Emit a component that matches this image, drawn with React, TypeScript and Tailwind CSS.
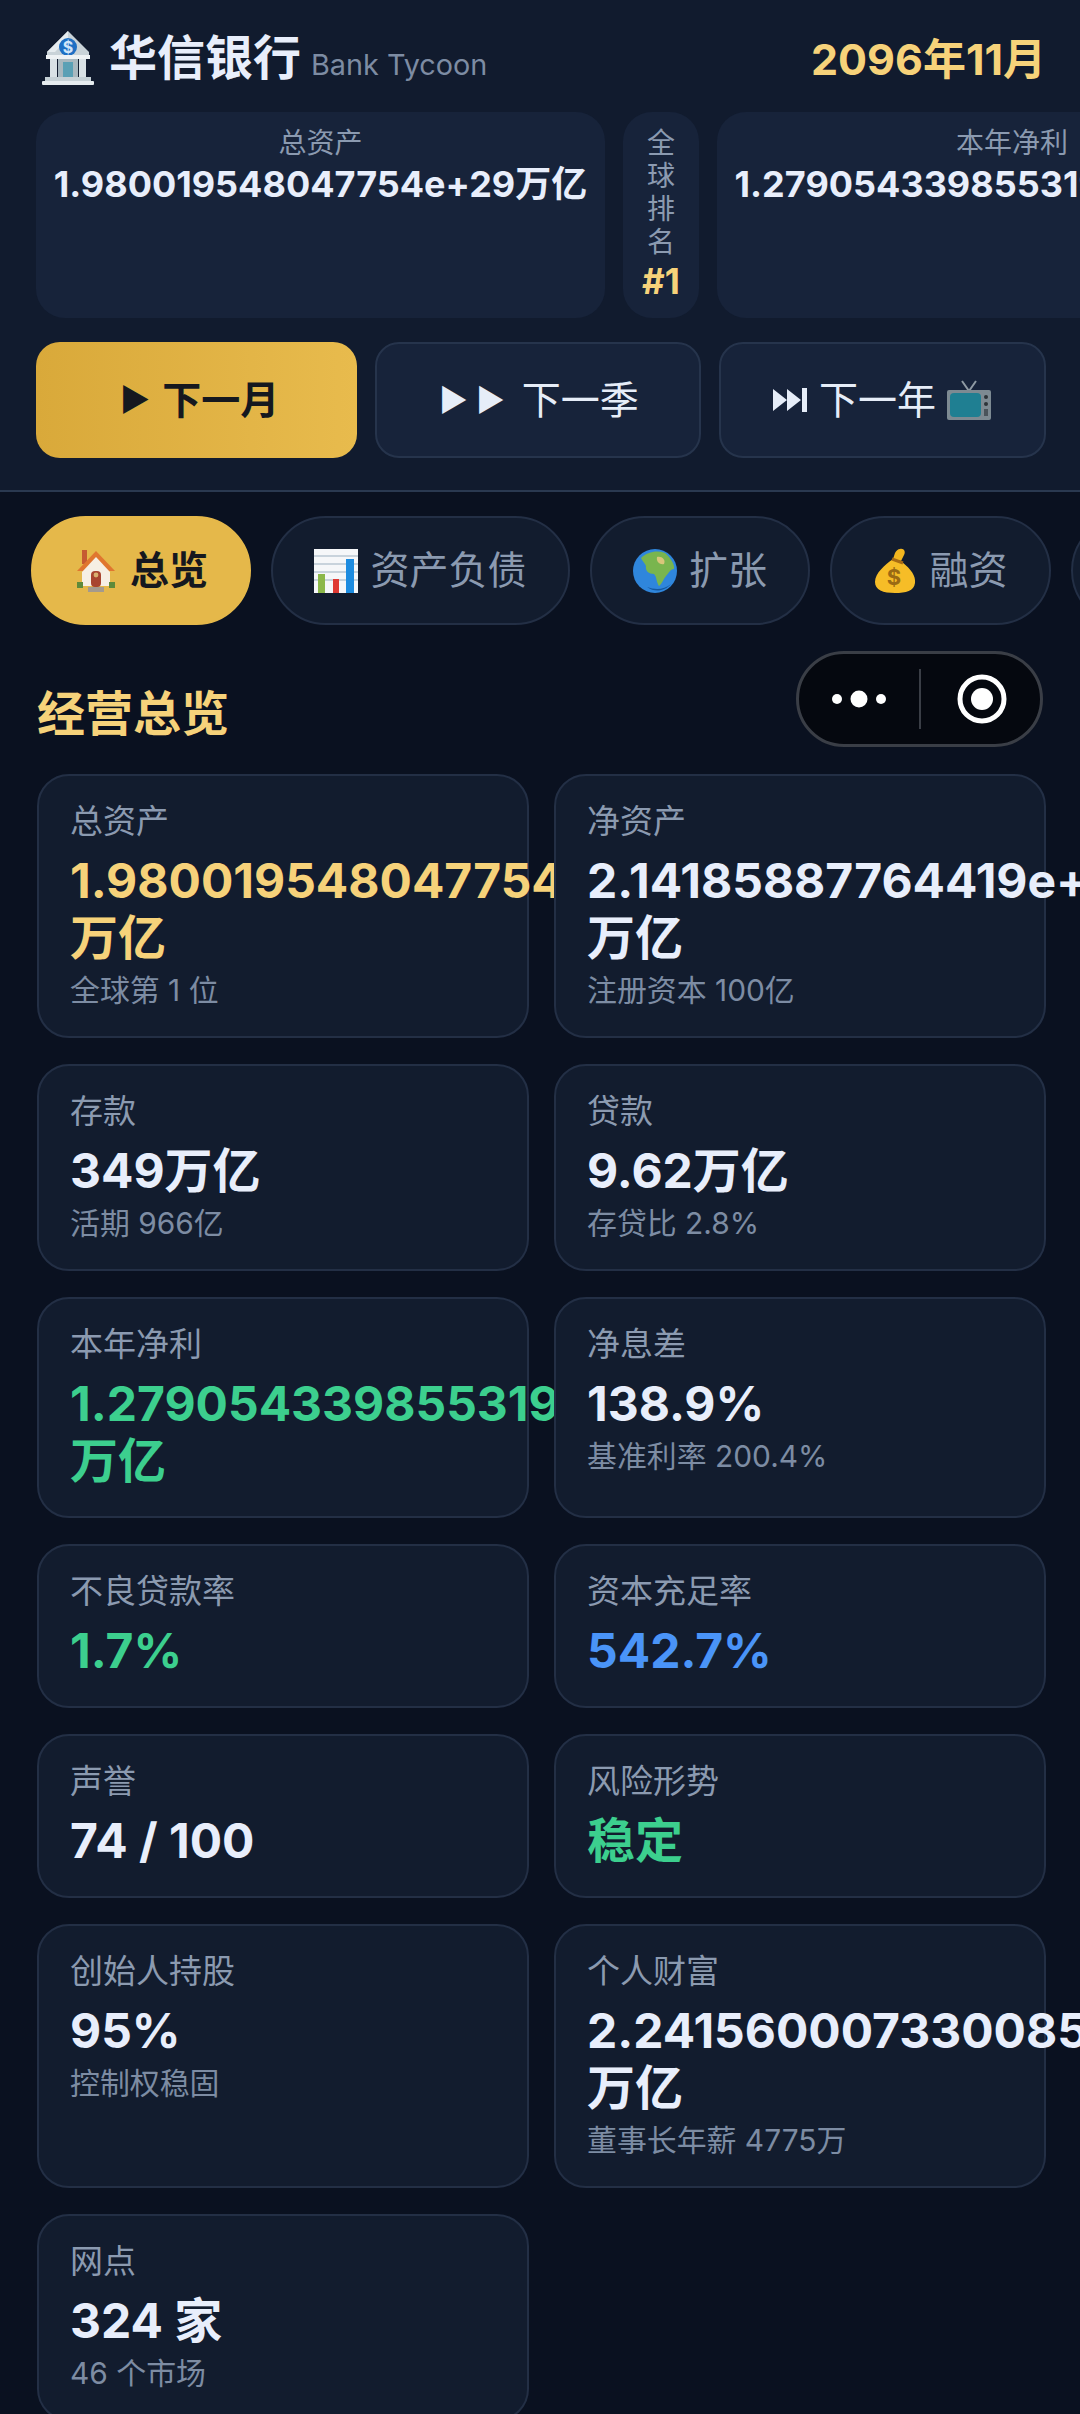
import React from "react";

const Bank = () => (
  <svg width="56" height="56" viewBox="0 0 54 56" className="shrink-0">
    <path d="M27 1 L48 22 V26 H6 V22 Z" fill="#c9d3d8" />
    <path d="M27 1 L6 22 H14 L27 8 Z" fill="#e6ecef" />
    <circle cx="27" cy="17" r="9" fill="#1e6fc4" />
    <text x="27" y="23" textAnchor="middle" fontSize="16" fontWeight="700" fill="#cfe5fa">$</text>
    <rect x="5" y="25" width="44" height="4" fill="#eef2f4" />
    <rect x="9" y="29" width="7" height="18" fill="#d9e1e5" />
    <rect x="38" y="29" width="7" height="18" fill="#d9e1e5" />
    <rect x="17" y="29" width="20" height="18" fill="#a9b8bf" />
    <rect x="22" y="32" width="10" height="15" fill="#5aa0b5" />
    <rect x="4" y="47" width="46" height="4" fill="#c6d1d6" />
    <rect x="1" y="51" width="52" height="4" rx="1" fill="#e6ecef" />
  </svg>
);

const Tv = () => (
  <svg width="46" height="42" viewBox="0 0 46 42" className="shrink-0">
    <path d="M16 2 L23 12 L30 2" fill="none" stroke="#8f9aa3" strokeWidth="2" />
    <rect x="1" y="11" width="44" height="30" rx="2" fill="#7d8a92" />
    <rect x="4" y="14" width="31" height="24" rx="4" fill="#1f7f92" />
    <circle cx="40" cy="18" r="2" fill="#2c3338" />
    <circle cx="40" cy="25" r="2" fill="#2c3338" />
    <rect x="38" y="30" width="4" height="7" fill="#4a545b" />
  </svg>
);

const House = () => (
  <svg width="44" height="46" viewBox="0 0 44 46" className="shrink-0">
    <rect x="8" y="2" width="5" height="14" fill="#c65a32" />
    <path d="M22 3 L41 23 H3 Z" fill="#e0762f" />
    <path d="M22 9 L36 24 V38 H8 V24 Z" fill="#f6efe4" />
    <rect x="17" y="23" width="10" height="16" rx="4" fill="#a8452f" />
    <circle cx="22" cy="27" r="2.4" fill="#d9b070" />
    <rect x="3" y="34" width="6" height="6" fill="#5f8a3a" />
    <rect x="35" y="34" width="6" height="6" fill="#5f8a3a" />
    <rect x="14" y="39" width="16" height="5" fill="#a49a8d" />
  </svg>
);

const Chart = () => (
  <svg width="44" height="44" viewBox="0 0 44 44" className="shrink-0">
    <rect x="0" y="0" width="44" height="44" fill="#f5f7f9" />
    <path d="M0 7 H44 M0 15 H44 M0 23 H44 M0 31 H44" stroke="#b9c8d2" strokeWidth="1.5" />
    <rect x="4" y="25" width="7" height="19" fill="#8cb84a" />
    <rect x="19" y="30" width="6" height="14" fill="#df3a34" />
    <rect x="32" y="10" width="8" height="34" fill="#1d8ce0" />
  </svg>
);

const Globe = () => (
  <svg width="44" height="44" viewBox="0 0 44 44" className="shrink-0">
    <circle cx="22" cy="22" r="22" fill="#2f86dc" />
    <path d="M8 9 C14 3 24 1 32 4 C38 9 42 16 41 20 C37 20 36 24 33 27 C30 31 28 36 26 37 C23 33 24 28 21 25 C16 25 12 22 13 17 C12 14 9 12 8 9 Z" fill="#79b54e" />
    <path d="M24 8 C29 7 33 11 31 15 C27 16 23 13 24 8 Z" fill="#d8c67a" />
    <path d="M14 38 C22 44 32 42 38 35 C31 41 22 41 14 38 Z" fill="#15579e" />
  </svg>
);

const Bag = () => (
  <svg width="44" height="46" viewBox="0 0 44 46" className="shrink-0">
    <path d="M27 1 C31 0 33 4 31 7 L28 13 L20 11 L22 5 C23 3 25 1 27 1 Z" fill="#f2b61f" />
    <path d="M20 11 L29 14 C38 21 43 28 42 35 C41 43 33 45 22 45 C10 45 2 42 2 34 C2 25 12 17 20 11 Z" fill="#f6bd27" />
    <path d="M19 11 L30 15" stroke="#a86b14" strokeWidth="3" />
    <text x="21" y="37" textAnchor="middle" fontSize="22" fontWeight="700" fill="#9a6a14">$</text>
  </svg>
);

const Stat = ({ label, value, w }: { label: string; value: string; w: string }) => (
  <div className={`${w} shrink-0 rounded-[29px] bg-[#17233a] px-[15px] pt-[15px] text-center`}>
    <div className="text-[28px] leading-[32px] text-[#8b9ab0]">{label}</div>
    <div className="mt-[3px] whitespace-nowrap text-[36px] font-bold leading-[44px] text-[#e8eefb]">{value}</div>
  </div>
);

type C = { l: string; v: string; s?: string; c?: string };
const cards: C[] = [
  { l: "总资产", v: "1.980019548047754e+29万亿", s: "全球第 1 位", c: "text-[#f6d27a]" },
  { l: "净资产", v: "2.14185887764419e+28万亿", s: "注册资本 100亿" },
  { l: "存款", v: "349万亿", s: "活期 966亿" },
  { l: "贷款", v: "9.62万亿", s: "存贷比 2.8%" },
  { l: "本年净利", v: "1.279054339855319e+28万亿", c: "text-[#3ccf8e]" },
  { l: "净息差", v: "138.9%", s: "基准利率 200.4%" },
  { l: "不良贷款率", v: "1.7%", c: "text-[#3ccf8e]" },
  { l: "资本充足率", v: "542.7%", c: "text-[#4a94f8]" },
  { l: "声誉", v: "74 / 100" },
  { l: "风险形势", v: "稳定", c: "text-[#3ccf8e]" },
  { l: "创始人持股", v: "95%", s: "控制权稳固" },
  { l: "个人财富", v: "2.241560007330085e+27万亿", s: "董事长年薪 4775万" },
  { l: "网点", v: "324 家", s: "46 个市场" },
];

const Card = ({ l, v, s, c }: C) => (
  <div className="relative rounded-[32px] border-2 border-[#232f45] bg-[#121c2e] pb-[27px] pl-[31px] pr-[32px] pt-[26px]">
    <div className="text-[33px] leading-[38px] text-[#8b9ab0]">{l}</div>
    <div className={`mt-[12px] text-[48px] font-bold leading-[57px] ${c ?? "text-[#e8eefb]"}`}>{v}</div>
    {s && <div className="mt-[5px] text-[29.9px] leading-[38px] text-[#7d8ca3]">{s}</div>}
  </div>
);

const Tab = ({ icon, text, active, w }: { icon: React.ReactNode; text: string; active?: boolean; w: string }) => (
  <div
    className={`${w} flex h-[109px] shrink-0 items-center justify-center gap-[12px] rounded-full border-2 text-[39px] ${
      active ? "border-[#e5b84a] bg-[#e5b84a] font-bold text-[#15181f]" : "border-[#232f45] bg-[#121c2e] text-[#8b9ab0]"
    }`}
  >
    {icon}
    <span>{text}</span>
  </div>
);

export default function App() {
  return (
    <div className="relative h-[2414px] w-[1080px] overflow-hidden bg-[#0a1120] font-['Inter','Noto_Sans_CJK_SC',sans-serif]">
      <header className="h-[492px] border-b-2 border-[#2a3950] bg-[#111b2e] pl-[36px] pr-[34px] pt-[30px]">
        <div className="flex h-[56px] items-center justify-between">
          <div className="flex items-center gap-[13px] pl-[4px]">
            <Bank />
            <div className="flex items-baseline gap-[10px]">
              <span className="text-[48px] font-bold leading-[56px] text-[#e8eefb]">华信银行</span>
              <span className="text-[28.8px] text-[#7d8ca3]">Bank Tycoon</span>
            </div>
          </div>
          <div className="pt-[2px] text-[43px] font-bold text-[#f6d27a]">2096年11月</div>
        </div>
        <div className="mt-[26px] flex h-[206px] gap-[18px]">
          <Stat label="总资产" value="1.980019548047754e+29万亿" w="w-[569px]" />
          <div className="flex w-[76px] shrink-0 flex-col items-center rounded-[29px] bg-[#17233a] pt-[15px]">
            <div className="w-[28px] text-center text-[28px] leading-[33px] text-[#8b9ab0]">全球排名</div>
            <div className="text-[35px] font-bold leading-[44px] text-[#f6d27a]">#1</div>
          </div>
          <Stat label="本年净利" value="1.2790543398553194e+28万亿" w="w-[590px]" />
        </div>
        <div className="mt-[24px] flex h-[116px] gap-[18px]">
          <div className="flex w-[321px] items-center justify-center gap-[12px] rounded-[24px] bg-gradient-to-r from-[#d9a93a] to-[#e8bb4d] pl-[6px] text-[39px] font-bold text-[#15181f]">
            <span className="text-[32px]">▶</span>下一月
          </div>
          <div className="flex w-[326px] items-center justify-center gap-[17px] rounded-[24px] border-2 border-[#26344c] bg-[#17233a] pl-[2px] text-[39px] text-[#e6edf8]">
            <span className="text-[31px]">▶ ▶</span>下一季
          </div>
          <div className="flex flex-1 items-center justify-center gap-[10px] rounded-[24px] border-2 border-[#26344c] bg-[#17233a] text-[39px] text-[#e6edf8]">
            <svg width="36" height="26" viewBox="0 0 36 26" fill="#e6edf8" className="shrink-0">
              <path d="M0 2 L14 13 L0 24 Z M14 2 L28 13 L14 24 Z" />
              <rect x="29" y="1" width="5" height="24" />
            </svg>
            下一年
            <Tv />
          </div>
        </div>
      </header>

      <main className="relative pl-[37px] pr-[34px] pt-[24px]">
        <div className="-ml-[6px] flex gap-[20px]">
          <Tab icon={<House />} text="总览" active w="w-[220px]" />
          <Tab icon={<Chart />} text="资产负债" w="w-[299px]" />
          <Tab icon={<Globe />} text="扩张" w="w-[220px]" />
          <Tab icon={<Bag />} text="融资" w="w-[221px]" />
          <div className="h-[109px] w-[200px] shrink-0 rounded-full border-2 border-[#232f45] bg-[#121c2e]" />
        </div>
        <div className="mt-[59px] text-[48px] font-bold leading-[60px] text-[#f6d27a]">经营总览</div>
        <div className="mt-[30px] grid grid-cols-2 gap-x-[25px] gap-y-[26px]">
          {cards.map((c) => (
            <Card key={c.l} {...c} />
          ))}
        </div>
      </main>

      <div className="absolute left-[796px] top-[651px] h-[96px] w-[247px] rounded-full border-[3px] border-[#3a3e46] bg-[#05080f]">
        <svg width="56" height="20" viewBox="0 0 56 20" className="absolute left-[32px] top-[35px]">
          <circle cx="6" cy="10" r="5" fill="#fff" />
          <circle cx="28" cy="10" r="8.5" fill="#fff" />
          <circle cx="50" cy="10" r="5" fill="#fff" />
        </svg>
        <div className="absolute left-[120px] top-[15px] h-[60px] w-[2px] bg-[#3a3e46]" />
        <svg width="50" height="50" viewBox="0 0 50 50" className="absolute left-[158px] top-[20px]">
          <circle cx="25" cy="25" r="22" fill="none" stroke="#fff" strokeWidth="5" />
          <circle cx="25" cy="25" r="11" fill="#fff" />
        </svg>
      </div>
    </div>
  );
}
